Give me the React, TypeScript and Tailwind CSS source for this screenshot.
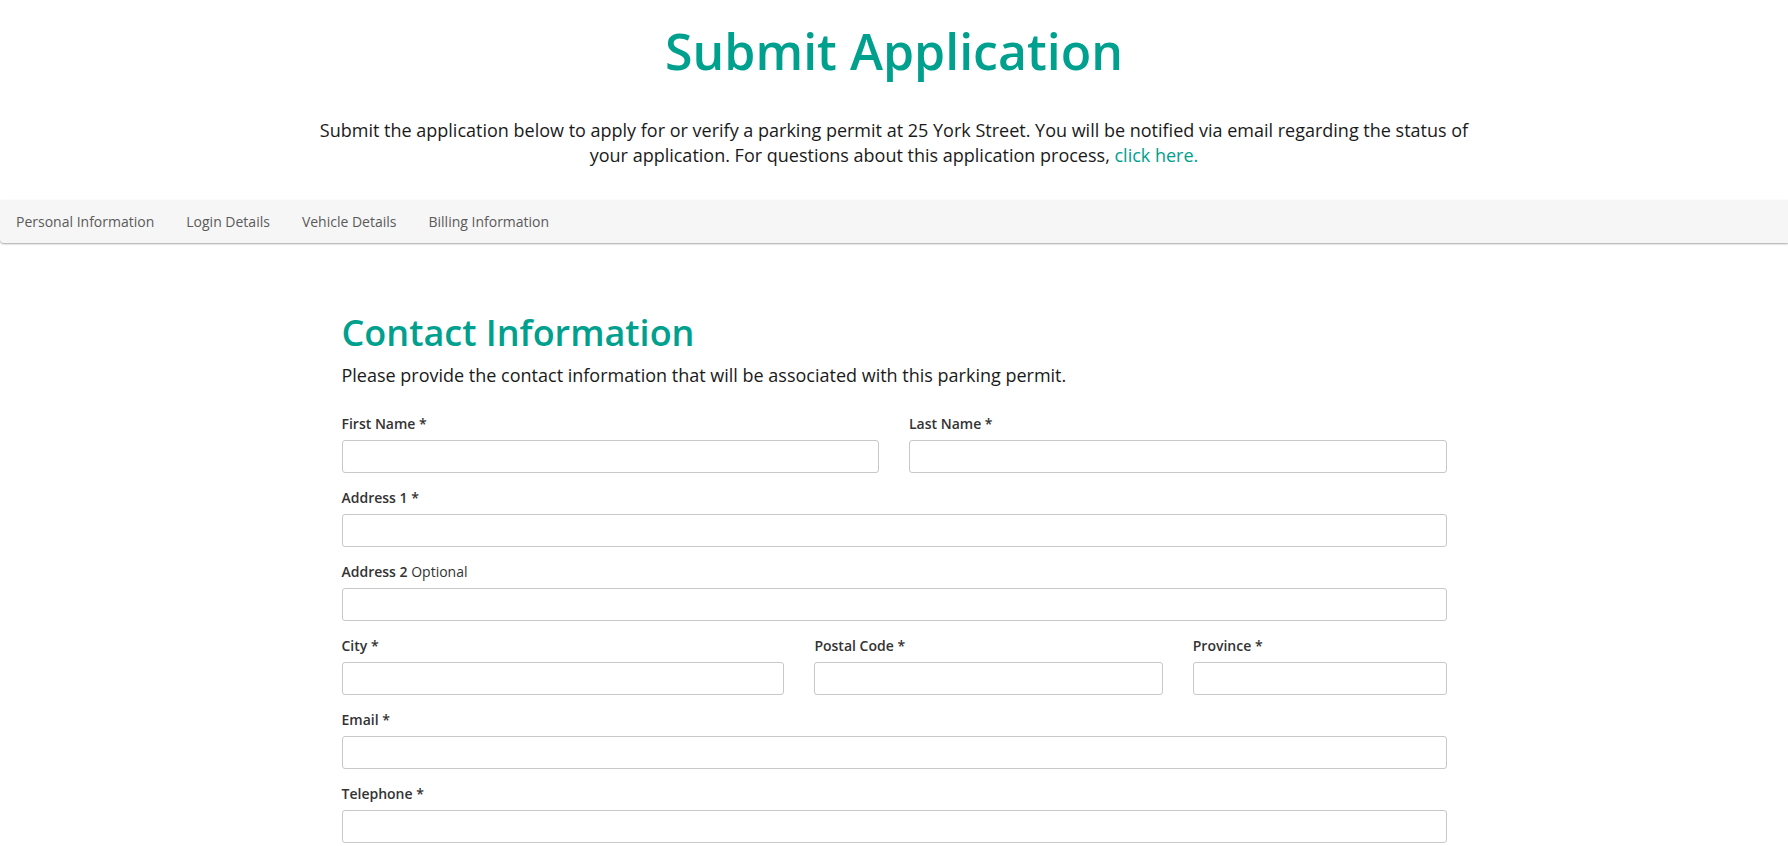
import React from "react";

const font = { fontFamily: '"Open Sans", "Noto Sans", Arial, sans-serif' };

const tabs = ["Personal Information", "Login Details", "Vehicle Details", "Billing Information"];

function Field({
  label,
  optional,
  className,
}: {
  label: string;
  optional?: boolean;
  className?: string;
}) {
  return (
    <div className={className}>
      <label className="mb-[6px] block text-[14px] leading-[20px] font-semibold text-[#333]">
        {label}
        {optional ? (
          <span className="font-normal"> Optional</span>
        ) : (
          <span> *</span>
        )}
      </label>
      <input
        type="text"
        className="block h-[33px] w-full rounded-[3px] border border-[#c8c8c8] bg-white px-3 text-[14px] text-[#333] outline-none"
      />
    </div>
  );
}

export default function App() {
  return (
    <div className="min-h-screen bg-white text-[#1a1a1a]" style={font}>
      {/* Page header */}
      <header className="px-4 pt-[22px] text-center">
        <h1 className="text-[50px] leading-[58px] font-semibold text-[#00a08e]">
          Submit Application
        </h1>
        <p className="mx-auto mt-[38px] max-w-[1170px] text-[18px] leading-[25px] text-[#1a1a1a]">
          Submit the application below to apply for or verify a parking permit at 25 York Street. You
          will be notified via email regarding the status of your application. For questions about
          this application process, <a href="#" className="text-[#00a08e]">click here.</a>
        </p>
      </header>

      {/* Step tabs */}
      <nav className="mt-[32px] flex h-[43px] items-center rounded-l-[4px] bg-[#f6f6f6] shadow-[0_1px_2px_rgba(0,0,0,0.35)]">
        {tabs.map((t) => (
          <a
            key={t}
            href="#"
            className="px-[16px] text-[14px] leading-[20px] text-[#5a5a5a]"
          >
            {t}
          </a>
        ))}
      </nav>

      {/* Contact form */}
      <main className="mx-auto w-[1105px] pt-[70px]">
        <h2 className="text-[36px] leading-[40px] font-semibold text-[#00a08e]">
          Contact Information
        </h2>
        <p className="mt-[10px] text-[18px] leading-[25px] text-[#1a1a1a]">
          Please provide the contact information that will be associated with this parking permit.
        </p>

        <form className="mt-[26px] grid grid-cols-12 gap-x-[30px] gap-y-[15px]">
          <Field label="First Name" className="col-span-6" />
          <Field label="Last Name" className="col-span-6" />
          <Field label="Address 1" className="col-span-12" />
          <Field label="Address 2" optional className="col-span-12" />
          <Field label="City" className="col-span-5" />
          <Field label="Postal Code" className="col-span-4" />
          <Field label="Province" className="col-span-3" />
          <Field label="Email" className="col-span-12" />
          <Field label="Telephone" className="col-span-12" />
        </form>
      </main>
    </div>
  );
}
